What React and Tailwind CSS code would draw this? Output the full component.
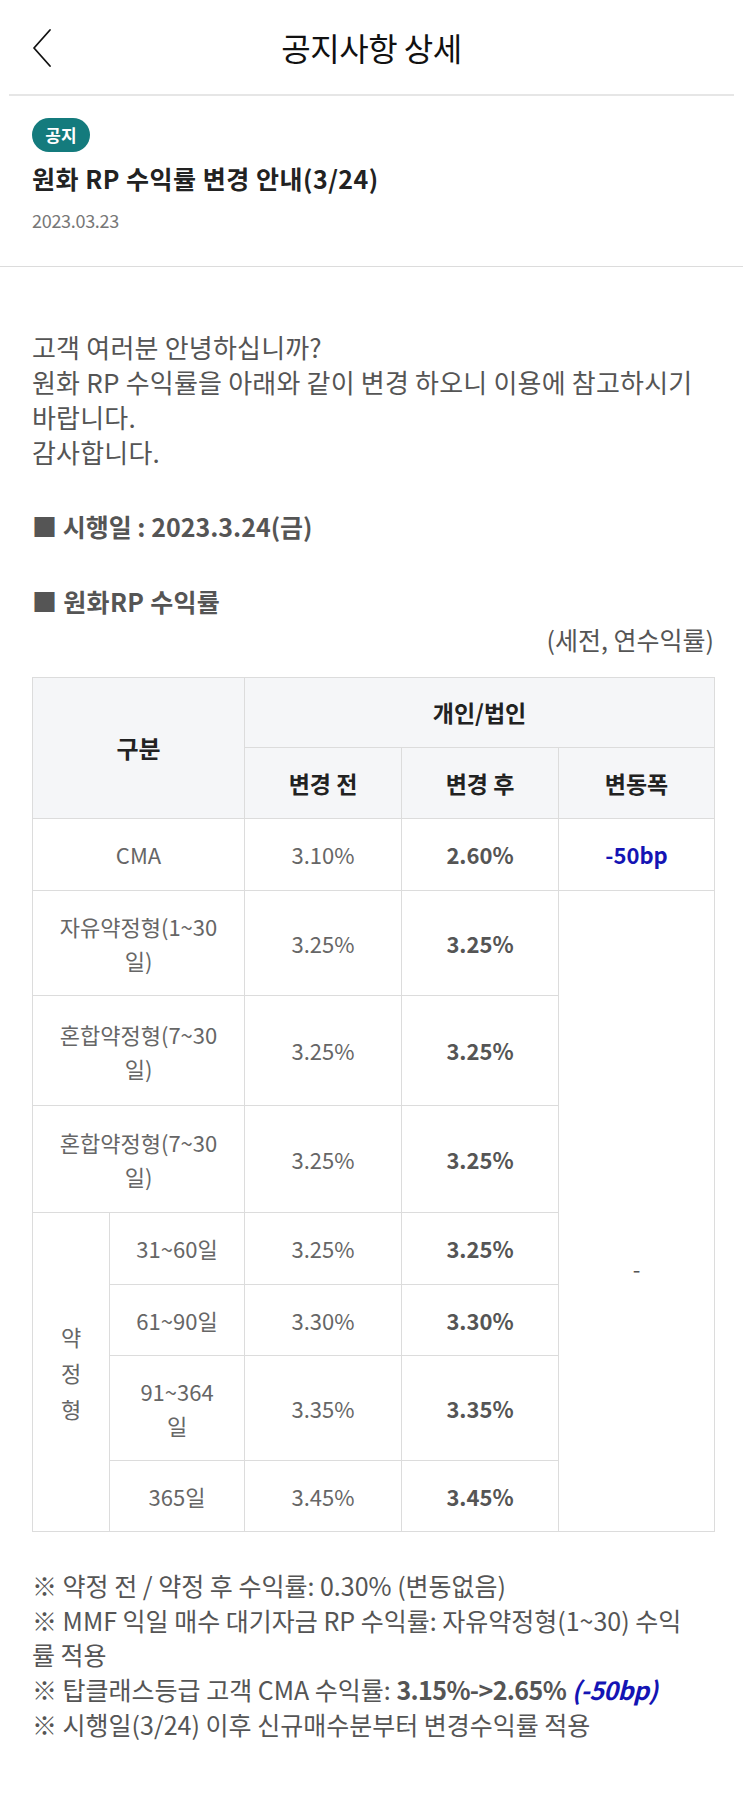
import React from "react";

const font = { fontFamily: '"Noto Sans CJK KR", "Noto Sans", sans-serif' };

function Td({ children, className = "", ...rest }) {
  return (
    <td
      {...rest}
      className={"border border-[#dcdcdc] text-center align-middle " + className}
    >
      {children}
    </td>
  );
}

export default function App() {
  return (
    <div style={font} className="w-[743px] min-h-[1806px] bg-white text-[#555]">
      {/* Header */}
      <div className="relative h-[94px] flex items-center justify-center">
        <button className="absolute left-[30px] top-[28px] w-[24px] h-[40px] flex items-center justify-center">
          <svg width="22" height="40" viewBox="0 0 22 40" fill="none">
            <path d="M19 2 L3 20 L19 38" stroke="#111" strokeWidth="1.8" strokeLinecap="round" strokeLinejoin="round" />
          </svg>
        </button>
        <h1 className="text-[32px] font-normal text-[#111] tracking-[-0.5px]">공지사항 상세</h1>
      </div>
      <div className="mx-[9px] h-[2px] bg-[#e6e6e6]" />

      {/* Notice meta */}
      <div className="px-[32px] pt-[22px] pb-[34px] border-b border-[#dcdcdc]">
        <span className="inline-flex items-center justify-center h-[34px] w-[58px] rounded-full bg-[#147b7d] text-white text-[17px] font-bold">
          공지
        </span>
        <div className="mt-[8px] text-[25px] font-bold text-[#222] leading-[36px] tracking-[0.5px]">
          원화 RP 수익률 변경 안내(3/24)
        </div>
        <div className="mt-[12px] text-[18px] text-[#777] leading-[24px] tracking-[-0.3px]">2023.03.23</div>
      </div>

      {/* Body */}
      <div className="pl-[32px] pr-[29px] pt-[62px] pb-[80px]">
        <p className="text-[26px] leading-[35px] tracking-[0.2px] text-[#555]">
          고객 여러분 안녕하십니까?
          <br />
          원화 RP 수익률을 아래와 같이 변경 하오니 이용에 참고하시기
          <br />
          바랍니다.
          <br />
          감사합니다.
        </p>

        <p className="mt-[40px] text-[25px] leading-[35px] font-bold tracking-[0px] text-[#555]">
          ■ 시행일 : 2023.3.24(금)
        </p>

        <p className="mt-[40px] text-[25px] leading-[35px] font-bold tracking-[0.3px] text-[#555]">
          ■ 원화RP 수익률
        </p>
        <p className="mt-[3px] text-right text-[25px] leading-[35px] tracking-[0px] text-[#555]">(세전, 연수익률)</p>

        <table className="mt-[20px] w-[682px] border-collapse table-fixed text-[22px] tracking-[0px]">
          <colgroup>
            <col className="w-[77px]" />
            <col className="w-[135px]" />
            <col className="w-[157px]" />
            <col className="w-[157px]" />
            <col className="w-[156px]" />
          </colgroup>
          <tbody>
            <tr className="h-[70px] bg-[#f5f6f8]">
              <Td rowSpan={2} colSpan={2} className="font-bold text-[#222] text-[24px]">구분</Td>
              <Td colSpan={3} className="font-bold text-[#222] text-[23px]">개인/법인</Td>
            </tr>
            <tr className="h-[71px] bg-[#f5f6f8]">
              <Td className="font-bold text-[#222] text-[23px]">변경 전</Td>
              <Td className="font-bold text-[#222] text-[23px]">변경 후</Td>
              <Td className="font-bold text-[#222] text-[23px]">변동폭</Td>
            </tr>
            <tr className="h-[72px] text-[#666]">
              <Td colSpan={2}>CMA</Td>
              <Td>3.10%</Td>
              <Td className="font-bold text-[#555]">2.60%</Td>
              <Td className="font-bold text-[#1414b4]">-50bp</Td>
            </tr>
            <tr className="h-[105px] text-[#666]">
              <Td colSpan={2} className="leading-[34px]">
                자유약정형(1~30
                <br />
                일)
              </Td>
              <Td>3.25%</Td>
              <Td className="font-bold text-[#555]">3.25%</Td>
              <Td rowSpan={8} className="pt-[114px] text-[#555]">-</Td>
            </tr>
            <tr className="h-[110px] text-[#666]">
              <Td colSpan={2} className="leading-[34px]">
                혼합약정형(7~30
                <br />
                일)
              </Td>
              <Td>3.25%</Td>
              <Td className="font-bold text-[#555]">3.25%</Td>
            </tr>
            <tr className="h-[107px] text-[#666]">
              <Td colSpan={2} className="leading-[34px]">
                혼합약정형(7~30
                <br />
                일)
              </Td>
              <Td>3.25%</Td>
              <Td className="font-bold text-[#555]">3.25%</Td>
            </tr>
            <tr className="h-[72px] text-[#666]">
              <Td rowSpan={4} className="leading-[36px]">
                약
                <br />
                정
                <br />
                형
              </Td>
              <Td>31~60일</Td>
              <Td>3.25%</Td>
              <Td className="font-bold text-[#555]">3.25%</Td>
            </tr>
            <tr className="h-[71px] text-[#666]">
              <Td>61~90일</Td>
              <Td>3.30%</Td>
              <Td className="font-bold text-[#555]">3.30%</Td>
            </tr>
            <tr className="h-[105px] text-[#666]">
              <Td className="leading-[34px]">
                91~364
                <br />
                일
              </Td>
              <Td>3.35%</Td>
              <Td className="font-bold text-[#555]">3.35%</Td>
            </tr>
            <tr className="h-[71px] text-[#666]">
              <Td>365일</Td>
              <Td>3.45%</Td>
              <Td className="font-bold text-[#555]">3.45%</Td>
            </tr>
          </tbody>
        </table>

        <div className="mt-[36px] text-[25px] leading-[34.7px] tracking-[0px] text-[#555]">
          <p>※ 약정 전 / 약정 후 수익률: 0.30% (변동없음)</p>
          <p>
            ※ MMF 익일 매수 대기자금 RP 수익률: 자유약정형(1~30) 수익
            <br />률 적용
          </p>
          <p>
            ※ 탑클래스등급 고객 CMA 수익률: <span className="font-bold tracking-[-0.6px]">3.15%-&gt;2.65%</span>{" "}
            <span className="font-bold italic tracking-[-0.6px] text-[#1414b4]">(-50bp)</span>
          </p>
          <p>※ 시행일(3/24) 이후 신규매수분부터 변경수익률 적용</p>
        </div>
      </div>
    </div>
  );
}
